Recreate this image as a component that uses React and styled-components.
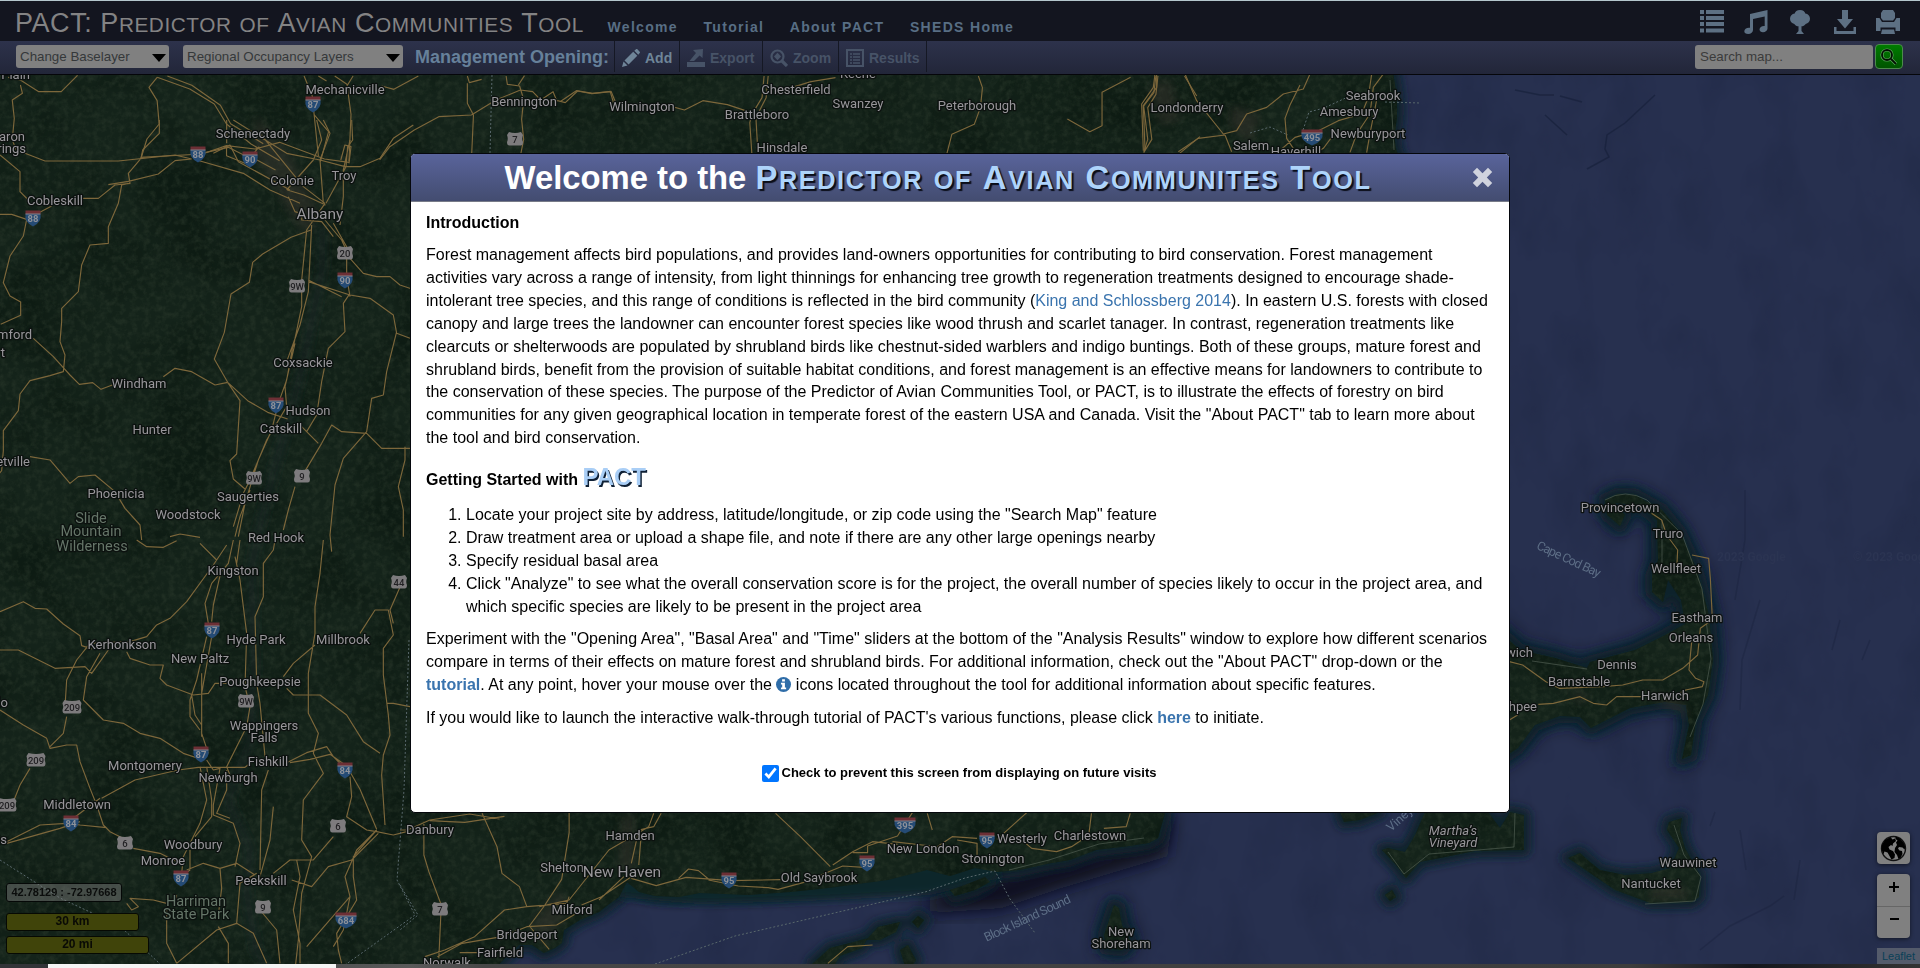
import React from "react";
import styled, { createGlobalStyle } from "styled-components";

const Global = createGlobalStyle`
  *, *::before, *::after { box-sizing: border-box; }
  body { margin: 0; background: #25304e; font-family: Arial, "Liberation Sans", sans-serif; overflow: hidden; }
`;

const Page = styled.div`
  display: flex;
  flex-direction: column;
  width: 1920px;
  height: 968px;
  border-top: 1px solid #b4c6cc;
  overflow: hidden;
  font-family: Arial, "Liberation Sans", sans-serif;
`;

/* Capitals at two sizes: a full-size initial, the rest of the word smaller. */
const CapsWord = styled.span`
  display: inline-block;
  font-size: 0.77em;
  line-height: 1;
  text-transform: uppercase;
  &::first-letter { font-size: ${(p) => (p.$flat ? "1em" : "1.2987em")}; }
`;
const Caps = ({ text }) =>
  text.split(" ").map((word, i) => (
    <React.Fragment key={word}>
      {i > 0 && " "}
      <CapsWord $flat={word === "of"}>{word}</CapsWord>
    </React.Fragment>
  ));

/* ---------- header ---------- */
const Header = styled.header`
  display: flex;
  flex: none;
  height: 40px;
  padding: 0 20px 0 15px;
  background: #13151f;
`;
const Brand = styled.h1`
  margin: 0;
  width: 592.5px;
  font-size: 27px;
  font-weight: 400;
  line-height: 45px;
  white-space: nowrap;
  letter-spacing: 0.55px;
  color: #838384;
`;
const Nav = styled.nav`
  display: flex;
  flex: 1;
  gap: 25.5px;
`;
const NavLink = styled.a`
  font-size: 14px;
  font-weight: 700;
  line-height: 52px;
  letter-spacing: 1.32px;
  white-space: nowrap;
  color: #586e84;
`;
const HeaderIcons = styled.div`
  display: flex;
  align-items: center;
  gap: 20px;
  padding-top: 1px;
  color: #5d7083;
  svg { display: block; }
  svg:nth-child(3) { margin: 0 4px 0 2px; }
`;

/* ---------- toolbar ---------- */
const Toolbar = styled.div`
  display: flex;
  flex: none;
  height: 34px;
  padding: 0 17px 0 16px;
  background: linear-gradient(#2d324b, #222639);
  border-bottom: 1px solid #05060a;
`;
const SelectBox = styled.div`
  display: flex;
  align-items: center;
  justify-content: space-between;
  width: ${(p) => p.$w}px;
  height: 23px;
  margin: 4px 14px 0 0;
  padding: 0 3px 0 4px;
  border-radius: 3px;
  background: #808080;
  font-size: 13.333px;
  color: #35383a;
  white-space: nowrap;
`;
const Caret = styled.span`
  border: 7px solid transparent;
  border-top: 8px solid #000;
  border-bottom: 0;
  margin-top: 2px;
`;
const ToolLabel = styled.div`
  width: 199px;
  margin-left: -2px;
  font-size: 18px;
  font-weight: 700;
  line-height: 32px;
  white-space: nowrap;
  color: #66809a;
`;
const Tool = styled.button`
  display: flex;
  align-items: center;
  gap: 5px;
  width: ${(p) => p.$w}px;
  height: 31px;
  padding: 3px 0 0 7px;
  border: 0;
  border-left: 1px solid #151824;
  background: none;
  font: 700 14px Arial, "Liberation Sans", sans-serif;
  color: ${(p) => (p.$on ? "#6f8598" : "#475367")};
  svg { display: block; flex: none; }
`;
const ToolEnd = styled.div`
  flex: 1;
  height: 31px;
  border-left: 1px solid #151824;
`;
const Search = styled.div`
  display: flex;
  gap: 2px;
  padding-top: 3px;
`;
const SearchField = styled.div`
  width: 178px;
  height: 24px;
  margin-top: 1px;
  padding-left: 5px;
  border-radius: 3px;
  background: #808080;
  font-size: 13.333px;
  line-height: 23px;
  color: #3b3b3b;
`;
const SearchButton = styled.button`
  display: grid;
  place-items: center;
  width: 28px;
  height: 25px;
  padding: 0;
  border: 1px solid #4d8a4d;
  border-radius: 4px;
  background: linear-gradient(#007c00, #005400);
`;

/* ---------- map ---------- */
const MapArea = styled.main`
  position: relative;
  flex: none;
  height: 889px;
  background: #27304e;
  overflow: hidden;
  svg { display: block; }
`;
const MapInfo = styled.div`
  position: absolute;
  left: 6px;
  bottom: 10px;
  display: flex;
  flex-direction: column;
  align-items: flex-start;
`;
const Coords = styled.div`
  width: 116px;
  height: 19px;
  margin-bottom: 11px;
  border: 1px solid #050807;
  border-radius: 3px;
  background: rgba(128, 128, 128, 0.46);
  font-size: 11px;
  font-weight: 700;
  line-height: 16px;
  letter-spacing: 0;
  text-align: center;
  color: #0b0d0c;
`;
const Scale = styled.div`
  width: ${(p) => p.$w}px;
  height: 18px;
  border: 1px solid #060903;
  border-radius: 3px;
  background: #40440a;
  font-size: 12px;
  font-weight: 700;
  line-height: 15px;
  text-align: center;
  color: #090a05;
  & + & { margin-top: 5px; }
`;
const MapControls = styled.div`
  position: absolute;
  right: 10px;
  bottom: 26px;
  width: 33px;
  display: flex;
  flex-direction: column;
  gap: 10px;
`;
const ControlBox = styled.div`
  border-radius: 4px;
  background: #808080;
  overflow: hidden;
  box-shadow: 0 1px 4px rgba(0, 0, 0, 0.55);
`;
const ControlCell = styled.div`
  display: grid;
  place-items: center;
  height: 32px;
  padding-bottom: ${(p) => p.$lift || 0}px;
  & + & { border-top: 1px solid #666; }
`;
const Credit = styled.div`
  position: absolute;
  right: 0;
  bottom: 0;
  width: 43px;
  height: 16px;
  padding-left: 5px;
  background: #545b6b;
  font-size: 11px;
  line-height: 16px;
  color: #093f57;
`;
const BottomStrip = styled.div`
  display: flex;
  flex: 1;
  padding-left: 48px;
  background: linear-gradient(90deg, #333438 0 48px, #5a5a5a 410px, #474747 484px, #3d3d3d 1630px, #15171d 1750px, #333 1919px);
`;
const StripThumb = styled.div`
  width: 288px;
  background: #f4f4f4;
`;

/* ---------- dialog ---------- */
const Dialog = styled.section`
  position: absolute;
  left: 410px;
  top: 153px;
  width: 1100px;
  height: 660px;
  display: flex;
  flex-direction: column;
  border: 1px solid #05070c;
  border-radius: 5px;
  background: #fff;
  overflow: hidden;
`;
const DialogHead = styled.div`
  display: flex;
  align-items: center;
  flex: none;
  height: 48px;
  padding: 0 16px 0 0;
  border-bottom: 1px solid #777b88;
  background: linear-gradient(#59649b, #434c70);
`;
const DialogTitle = styled.h2`
  flex: 1;
  margin: 0;
  padding-right: 7px;
  font-size: 32.8px;
  font-weight: 700;
  line-height: 46px;
  text-align: center;
  white-space: nowrap;
  color: #fff;
`;
const ToolName = styled.span`
  letter-spacing: 1.6px;
  color: #aed4fb;
  text-shadow: 2px 2px 1px #0a0d18;
`;
const CloseButton = styled.button`
  padding: 0;
  border: 0;
  background: none;
  svg { display: block; }
`;
const DialogBody = styled.div`
  padding: 10px 15px 0;
  font-size: 16px;
  line-height: 22.857px;
  color: #000;
`;
const Heading = styled.div`
  font-weight: 700;
  margin-top: ${(p) => p.$top || 0}px;
  line-height: ${(p) => p.$lh || 22.857}px;
`;
const Pact = styled.span`
  font-size: 24px;
  line-height: 1;
  color: #a9cef6;
  text-shadow: 1.5px 1.5px 0.5px #0f2035;
`;
const Text = styled.p`
  margin: ${(p) => p.$top || 10}px 0 0;
`;
const Steps = styled.ol`
  margin: 10px 0 0;
  padding-left: 40px;
`;
const Link = styled.a`
  color: #3a74ae;
  font-weight: ${(p) => (p.$bold ? 700 : 400)};
`;
const InfoIcon = styled.svg`
  vertical-align: -2px;
`;
const Consent = styled.label`
  display: flex;
  align-items: center;
  justify-content: center;
  gap: 3px;
  margin-top: 32px;
  padding-right: 2px;
  font-size: 13px;
  font-weight: 700;
`;
const Check = styled.input`
  width: 17px;
  height: 17px;
  margin: 0;
`;

/* ---------- icons ---------- */
const ListIcon = () => (
  <svg width="24" height="23" viewBox="0 0 24 23" fill="currentColor">
    {[0, 6, 12, 18.5].map((y) => (
      <g key={y}>
        <rect x="0" y={y} width="4" height="4" />
        <rect x="6" y={y} width="18" height="4" />
      </g>
    ))}
  </svg>
);
const MusicIcon = () => (
  <svg width="24" height="24" viewBox="0 0 24 24" fill="currentColor">
    <path d="M6 4 23.500 0v18.500c0 2-2 3.700-4.500 3.700-2 0-3.500-1-3.500-2.600 0-2 2-3.600 4.500-3.600h.7V6.500L9 9v11c0 2.300-2 4-4.800 4C1.800 24 .3 23 .3 21.300c0-2 2-3.600 4.700-3.600h1z" />
  </svg>
);
const TreeIcon = () => (
  <svg width="20" height="24" viewBox="0 0 20 24" fill="currentColor">
    <path d="M10 0c3 0 5 1.600 5.300 3.600C18 4 20 6 20 8.800c0 3-2 4.500-4.300 5.200-1.200 1.600-2.600 2.300-4.200 2.300V21l2.500 3H6l2.500-3v-4.700C6.800 16.300 5.300 15.600 4.300 14 2 13.500 0 11.700 0 8.800 0 6 2 4 4.700 3.600 5 1.600 7 0 10 0z" />
  </svg>
);
const DownloadIcon = () => (
  <svg width="22" height="24" viewBox="0 0 22 24" fill="currentColor">
    <path d="M8 0h6v9h5l-8 9.500L3 9h5zM0 17h2.500v4h17v-4H22v7H0z" />
  </svg>
);
const PrintIcon = () => (
  <svg width="24" height="24" viewBox="0 0 24 24" fill="currentColor">
    <path d="M7 0h10l2 3v5l-2 2.500H7L5 8V3zM0 8h3.500l2.500 4h12l2.500-4H24v13h-4.500v-3.500h-15V21H0zM6 19.500h12l1 4.500H5z" />
  </svg>
);
const PencilIcon = () => (
  <svg width="18" height="18" viewBox="0 0 18 18" fill="currentColor">
    <path d="M0 18l1.500-5.500 4 4zM2.500 11.400 11.200 2.700l4.100 4.100-8.700 8.700zM12.300 1.700 14 .2c.5-.3 1-.2 1.400.1L17.700 2.700c.4.500.4 1 0 1.400l-1.400 1.600z" />
  </svg>
);
const ExportIcon = () => (
  <svg width="18" height="18" viewBox="0 0 18 18" fill="currentColor">
    <path d="M0 13h18v5H0zM6 1l10-1-.5 9-3-2.500L7 12H2.500L9 4z" />
  </svg>
);
const ZoomIcon = () => (
  <svg width="18" height="18" viewBox="0 0 18 18" fill="none" stroke="currentColor">
    <circle cx="7.500" cy="7.500" r="6" strokeWidth="2.200" />
    <path d="M12 12l5 5" strokeWidth="3.200" />
    <path d="M7.500 3.800 11 7.500l-3.500 3.700L4 7.500z" fill="currentColor" stroke="none" />
  </svg>
);
const ResultsIcon = () => (
  <svg width="18" height="18" viewBox="0 0 18 18" fill="none" stroke="currentColor">
    <rect x="1" y="1" width="16" height="16" strokeWidth="2" />
    <path d="M4 5h2M4 8h2M4 11h2M4 14h2M7 5h7M7 8h7M7 11h7M7 14h7" strokeWidth="1.600" />
  </svg>
);
const SearchIcon = () => (
  <svg width="18" height="18" viewBox="0 0 18 18" fill="none">
    <g stroke="#5fa35f" strokeWidth="3.200"><circle cx="7" cy="7" r="5" /><path d="M11 11l5 5" /></g>
    <g stroke="#021002" strokeWidth="1.800"><circle cx="7" cy="7" r="5" /><path d="M11 11l5 5" /></g>
  </svg>
);
const CloseIcon = () => (
  <svg width="21" height="21" viewBox="0 0 21 21">
    <path d="M5 .8 10.500 6.200 16 .8 20.200 5 14.800 10.500l5.400 5.500-4.200 4.200-5.500-5.400L5 20.200.8 16l5.400-5.500L.8 5z" fill="#d0d3de" />
  </svg>
);
const GlobeIcon = () => (
  <svg width="27" height="27" viewBox="0 0 27 27">
    <circle cx="13.500" cy="13.500" r="12" fill="#808080" stroke="#111" strokeWidth="1.400" />
    <path d="M10.500 2 5 5 2 10l-.5 4 1.700 5.500 1.300-3 3 1 2 3.500 2 3.500 3-1.500.5-3.500-2-3.500-3.500-1.500-1-2.500 2.500-2 1.500 1 .5-2.500 3-2.500-1-2.500-2.500 1zM15.500 1.500 20 3.500l3.500 4L25.500 12l-1 2.500-2-2-3.500-.5-1 1.500 1.500 2 2.500.5.500 3-2 4-2 1-1.500-4-2.500-3 .5-4 2-3-1-2.500 1.500-2-2-1.500z" fill="#000" />
  </svg>
);

/* ---------- map data ---------- */
const places = [
  [345, 89, "Mechanicville"], [253, 133, "Schenectady"], [292, 180, "Colonie"], [344, 175, "Troy"],
  [55, 200, "Cobleskill"], [139, 383, "Windham"], [152, 429, "Hunter"], [303, 362, "Coxsackie"],
  [308, 410, "Hudson"], [281, 428, "Catskill"], [116, 493, "Phoenicia"], [248, 496, "Saugerties"],
  [188, 514, "Woodstock"], [276, 537, "Red Hook"], [233, 570, "Kingston"], [122, 644, "Kerhonkson"],
  [200, 658, "New Paltz"], [256, 639, "Hyde Park"], [343, 639, "Millbrook"], [260, 681, "Poughkeepsie"],
  [264, 725, "Wappingers"], [264, 737, "Falls"], [145, 765, "Montgomery"], [268, 761, "Fishkill"],
  [228, 777, "Newburgh"], [77, 804, "Middletown"], [193, 844, "Woodbury"], [163, 860, "Monroe"],
  [261, 880, "Peekskill"], [430, 829, "Danbury"], [630, 835, "Hamden"], [562, 867, "Shelton"],
  [572, 909, "Milford"], [527, 934, "Bridgeport"], [500, 952, "Fairfield"], [447, 962, "Norwalk"],
  [819, 877, "Old Saybrook"], [923, 848, "New London"], [1022, 838, "Westerly"], [993, 858, "Stonington"],
  [1090, 835, "Charlestown"], [1121, 931, "New"], [1121, 943, "Shoreham"], [1688, 862, "Wauwinet"],
  [1651, 883, "Nantucket"], [1620, 507, "Provincetown"], [1668, 533, "Truro"], [1676, 568, "Wellfleet"],
  [1697, 617, "Eastham"], [1691, 637, "Orleans"], [1617, 664, "Dennis"], [1579, 681, "Barnstable"],
  [1665, 695, "Harwich"], [524, 101, "Bennington"], [642, 106, "Wilmington"], [796, 89, "Chesterfield"],
  [757, 114, "Brattleboro"], [858, 103, "Swanzey"], [858, 73, "Keene"], [977, 105, "Peterborough"],
  [782, 147, "Hinsdale"], [1187, 107, "Londonderry"], [1373, 95, "Seabrook"], [1349, 111, "Amesbury"],
  [1368, 133, "Newburyport"], [1251, 145, "Salem"], [1296, 151, "Haverhill"],
];
const edgePlaces = [
  [25, 136, "Sharon"], [26, 148, "Springs"], [32, 334, "Stamford"], [5, 352, "rt"], [30, 461, "Margaretville"],
  [8, 702, "Monticello"], [7, 839, "Port Jervis"], [30, 74, "Fort Plain"], [1533, 652, "Sandwich"], [1537, 706, "Mashpee"],
];
const parks = [
  [91, 518, "Slide"], [91, 531, "Mountain"], [92, 546, "Wilderness"], [196, 901, "Harriman"], [196, 914, "State Park"],
];
const interstates = [
  [198, 154, "88"], [250, 159, "90"], [33, 218, "88"], [345, 280, "90"], [276, 405, "87"], [212, 630, "87"],
  [201, 754, "87"], [345, 770, "84"], [71, 823, "84"], [181, 878, "87"], [346, 920, "684"], [313, 104, "87"],
  [729, 880, "95"], [867, 863, "95"], [905, 825, "395"], [987, 840, "95"], [1312, 137, "495"],
];
const usRoutes = [
  [345, 253, "20"], [297, 286, "9W"], [254, 478, "9W"], [302, 476, "9"], [399, 582, "44"], [72, 707, "209"],
  [246, 701, "9W"], [36, 760, "209"], [7, 805, "209"], [338, 826, "6"], [125, 843, "6"], [263, 907, "9"],
  [515, 139, "7"], [440, 909, "7"],
];

/* Each sheet is a piece of the road network, digitised on its own grid. */
const roadSheets = [
  {
    t: "translate(0 0) scale(.40816 .33333)",
    d: [
      "M190 226 150 275H95L50 240 20 232M50 255l5 25-25 20 5 55-5 65 10 30",
      "M385 232l-20 30 20 40 5 70-30 45-15 60M385 232l80 35 60 45 30 60 60 60 70 50M410 228l60 28 70 60 25 55 80 60M745 228l20 60 5 60 10 120M770 345l35 50-20 90M820 228l30 25 10 90-5 140M1025 228l-60 40-30-10M865 228l-15 30M780 228l20 15",
      "M345 472l150-10 60-25 70 10 60-20 110 50 60 10M555 437v30l60 30M635 440l-20 30 60 40M835 480l10-45 15 5-5 50",
      "M1145 228l5 20 30-10M1145 250v60l15 35-5 135M1155 345l-80 5-60 40-60 50-25 40M1155 345l60-45 60-30 30 5 20 25 30-25 10 30M1240 228l3 25 30 5 10 40-5 60 5 60-10 62M1270 255l15-28M1360 300l25 8 30-35 35 8 45-6 10 40",
    ],
  },
  {
    t: "translate(560 0) scale(.40816 .33333)",
    d: [
      "M0 305l40-33 40 8 45-6 10 30M275 320l30 10 45-28 60 12 50 20M500 228l-5 65-25 50-5 25 5 92M510 228l-5 65-25 60 5 107M535 275l80-30 60-12M1025 228l10 35-5 60-15 50-55 30-12 57M1398 232l-70 45v100l-30 18-55-38M1460 228l-5 50-25 40 10 100-10 40M1465 228l-5 55-20 40 10 95-20 40M1530 228l30 60M1568 410l-50 50",
    ],
  },
  {
    t: "translate(0 120) scale(.33333)",
    d: [
      "M478 0v40l-50 50-5 25-38 45 5 30-45 5-50 40h-50M0 105l60 50v60l25 25M0 283h35l45 15 75-40M75 100l60 23h220l170-18 50 12M575 117l-50 5-50 40-90 22-60 10M575 107l110-25 70 35M385 190l-20 5-10 55-30 70v50l-55 5-25 60-10 80-50 50v40l-5 60 15 40-5 50-40 12-60 15-30 40-5 50-45 60v60l-5 60-25 30M80 298l-10 50-40 60-20 80 20 40 32 18v40l-60 27M100 655l60 55 50 55 28 28 40-5 25 20 40-15M490 770l35-25 50 10 70 40 38-8M683 787l-40-70 30-80 20-115 55-35 10-60 30-25 85-50 60-22M683 787l60 55 60 35 60 20M683 787l37 55-10 160-20 20 10 55 35 30",
      "M590 120l140 40 80 50 90 40M640 100l50-25 25 50 155 85M680 0v70M700 0l80 50 80 50 100 20 75 20h45l60-25 40-60 60-40M780 40l130 160 65 50M950 0l15 60-25 60-80 90M970 0l20 40-30 80 10 130M1055 0l3 60-15 20-5 60-60 110M1050 60l-20 90v80l-10 85M862 210l50 15 65 30M865 230l20 45 30 10M905 260v40l60 5 35 45M975 250l-55 80-15 150v80l-25 120M935 315l-10 200-25 100-40 110M1000 310l40 70v90l10 60M975 300l50 60 25 55 40 45 40 10h40l30 25 45 15M925 485l125 40 60 10 70 50 10 55 40 15M925 480l100 50M1050 520l-20 30 5 85-50 50-20 100-15 100-30 50M1190 635l-30 120-10 70-35 10-15 100-70 80-25 80-15 150 5 50M1100 940l-75-5-30-20-30 55-60 100M905 920l50 50M1100 940l45 45h85M1215 980v40l-20 80 15 70v80M880 670l-20 110-25 70-20 80-40 90-40 130-20 100M885 670l-30 130 5 60-60 100-50 120-20 40-30 100M885 1100l-20 70-15 60M750 1110l-30 80-15 60M90 1010l60 10 60 70 25-20 50-5 60 50 30 50 45 50 5 45M510 1250l30-8 60 10",
    ],
  },
  {
    t: "translate(0 540) scale(.33333)",
    d: [
      "M410 0l30 20 50 2 40-20M600 10l50 50M680 15l-40 60-80 110-50 50-40 20-30 35-50 15-120 5-40 50-30 60-5 80M700 0l-15 70-50 60-20 60 10 60M665 85l-25 110-5 50M705 50l15 70 20 160-5 160 15 60-10 60-60 120 10 25M720 0l-10 70M825 0l-5 30-30 40v100l-25 60 5 200 10 60 15 160M970 0l-10 100-15 100v80l-20 120v120l30 60-15 60 30 60-60 80-5 120 30 50-30 110-10 140-10 90M0 215l70-30 35 20 35 2 50 45 50 35 5 30 30 10M0 330h55l110 55 90-5 20 20 50-70M300 340l-40 70-10 70 60 60 60 10 50 30 60 15 70 45 60 20M380 335l10 20 60 20h40l-10 40 20 20 80 30 45-5 20-30h35M575 465l10 60 20 30M620 290l-30 130-20 60v50l30 40M635 290l-30 170v130M605 400v180l20 60M0 510l70 45 70 40 10 30 50-10h30l10 50 30 80 20 50 20 60 20 20 60 30M200 530l-10 50-40 40M90 685l-30 50-20 50M305 775l100-55 130-30 60-8h140l20-15M220 835l80-60M20 905l100-50 80-5 40 5 80 8M20 910l160-45 60-20M620 660l20 30 20-5-20 110v30l60 25 20 60-15 70M620 680l15 100v50l-50 60M680 690v60l-30 70 40 15M600 680l20 100-20 70-50 100-5 50M570 930v60l-20 15M400 925l80 15 60 30M560 990l50-20 50 15 50-15 55 35M860 445l20 20h80l80 60 50 80 50 35M850 410l30-40 65-55M1080 280l45-70h40l15 75-30 40v80l15 120 5 60-20 60-5 60 10 150M1205 130l-35 80 10 40M1160 490h20l50 10M860 668l60-30 60-18 20 30 40 40M870 668l60-10 60-15 50 35 40 70 50 120M1050 710l5 60-15 60 60 40 30 5 50 10 40-10M1130 870l-60 60-35 80 15 60-130 150M1135 880l-80 80-70 20-50 60-60-20M1000 890l-60 70h-70l-50 40M1130 870l-70 80v60l10 70-60 100 5 50 10 40M1050 1070l-20 100-30 50M890 960l10 50-20 100 20 100v60M770 1000l-50 30-10 120-60 20-120 100M710 1150l50 30 40 90M655 1160l30 50v60M780 1110l50 60 10 100M660 985l5 60-10 80M380 1090l15 20 20-10-25-25 70 5 40 10v120l30 60M805 690l-20 60-5 240M820 800l-10 100-30 110M530 1065l-10 30",
    ],
  },
  {
    t: "translate(400 800) scale(.49745 .33333)",
    d: [
      "M0 90h15l45-30 80-18 60 15M60 62l70 5 80-18M48 65v100l10 50 25 100-5 160M165 40l30 100 10 80 35 40 15 60M340 38v60l-15 140-35 80-30 60 40 70M255 320l80-10 5-20M255 320l-45 10-60 80-60 40-40 20M120 458h40M75 470l50-40 80-20 50-30 60-5 45-40M525 40l-15 40-30 10-15 100M510 40l-10 40-80 70-80 150-60 20M485 100l-5 95M465 230l-60 60-40 25M450 230l-50 70M465 235l50 22 60-25 90 10 100-3M560 235l20-28 20 5 20 25M620 240l60 18 60 5 20 5 50-20 40-25 40-25 50 5M755 40l50 70 60 90M870 195l40-40 40-30 50 8M910 158h30v-20l60-30 30-70M990 125l60 10 30 5 30-30 50 5M1060 40l10 50M1120 120l40 10v40M1200 118l60-80M1250 120l20 25 50 10 30-15 30-30M1390 40l-5 60M1415 85l45-5 8-40M860 490l40-50 50-5",
    ],
  },
  {
    t: "translate(1500 450) scale(.33333)",
    d: [
      "M28 635l40 10 70 50 40 20 130-5 60-5 60-15h60l60-35 45-40 8-80 35-25v-25l-5-100-5-60-50-10M575 575l-8 85 20 25 25 10-5 15-50 10-60 30M425 740h-75l-30 25-40-5-40-20-80 20-45 3M28 810l25-15M455 190l30 20 15 45 33 45-3 60",
    ],
  },
  {
    t: "translate(1130 70) scale(.33333)",
    d: [
      "M80 12v40l-40 55 5 130M75 12l-5 40-35 50 5 140M165 12l35 80 80 100 40-10 30-50 60-20 50-40 60-15 20-45M510 45l-30 60-15 40 5 60 20 30M285 195l-80 10-60 40M285 195l20 50M725 12l-10 70-20 50-70 20-60 30-70 20-40 35M760 12l-30 40-10 80-40 60-20 55M740 90l-20 100-10 58M610 195l-30 40-20 12",
    ],
  },
];

const mainland = "M-10 60H1390Q1400 100 1396 125T1402 160V500L1165 700V813L1158 838 1149 843 1130 846 1096 850 1070 860 1047 864 1020 870 997 872 975 868 950 876 927 870 888 880 858 884 828 888 790 892 748 895 700 893 679 897 655 896 639 892 627 882 619 897 608 905 599 912 580 920 564 930 562 943 555 948 544 953 532 945 519 945 505 958 489 975H-10z";
const capeCod = "M1500 632 1520 650 1555 658 1587 668 1590 662 1635 650 1665 635 1685 624 1681 600 1668 580 1663 602 1652 592 1652 575 1658 560 1657 520 1640 505 1615 503 1625 515 1620 526 1607 515 1605 500 1618 494 1635 495 1662 510 1680 532 1697 570 1709 615 1713 660 1708 695 1696 720 1691 755 1682 759 1689 725 1686 705 1665 702 1630 708 1591 728 1580 717 1560 716 1535 725 1518 748 1500 760z";
const islands = [
  "M1382 850 1388 848 1405 852 1415 835 1425 812 1488 812 1500 828 1510 812 1524 815 1524 850 1475 851 1420 862 1406 878 1396 865z",
  "M1568 858 1580 853 1590 862 1600 870 1625 875 1652 873 1670 868 1679 848 1667 830 1669 822 1682 818 1680 830 1685 848 1700 875 1699 897 1692 902 1650 903 1615 890 1590 873z",
  "M1385 895 1392 890 1396 897 1390 901z",
  "M1104 935 1114 905 1119 908 1122 925 1130 940 1122 950 1106 948z",
  "M812 964 830 948 850 943 868 938 862 948 840 956 834 966z",
  "M866 940 878 927 900 922 896 932 880 940z",
  "M912 922 918 916 924 920 918 928z",
  "M950 890 965 885 985 877 990 882 975 890 955 896z",
  "M900 950 908 945 916 960 912 966 905 966z",
  "M1340 812 1380 812 1360 820 1344 822z",
];
const land = [mainland, capeCod, ...islands];

const Interstate = ({ x, y, n }) => {
  const w = n.length > 2 ? 10.5 : 7.5;
  return (
    <g transform={`translate(${x} ${y})`}>
      <path d={`M${-w} -4Q${-w - 1.5} 4 0 8.500Q${w + 1.5} 4 ${w} -4z`} fill="#254b75" />
      <path d={`M${-w} -7.500H${w}V-4H${-w}z`} fill="#6d2f35" />
      <path d={`M${-w} -4H${w}`} stroke="#85858d" strokeWidth="1" />
      <text y="4" textAnchor="middle" fontSize="9.500" fontWeight="700" fill="#8d9199">{n}</text>
    </g>
  );
};
const UsRoute = ({ x, y, n }) => {
  const w = n.length > 2 ? 9.5 : 8;
  return (
    <g transform={`translate(${x} ${y})`}>
      <path d={`M${-w + 2} -7Q0 -5 ${w - 2} -7L${w} -4Q${w - 1.5} 0 ${w} 3Q${w} 7 ${w - 3} 6.500H${-w + 3}Q${-w} 7 ${-w} 3Q${-w + 1.5} 0 ${-w} -4z`} fill="#7d7b7d" />
      <text y="3.500" textAnchor="middle" fontSize="9.500" fontWeight="500" fill="#222124">{n}</text>
    </g>
  );
};

const MapDrawing = () => (
  <svg width="1920" height="889" viewBox="0 75 1920 889" fontFamily="Roboto, sans-serif">
    <defs>
      <filter id="ground" x="0" y="75" width="1920" height="889" filterUnits="userSpaceOnUse" colorInterpolationFilters="sRGB">
        <feTurbulence type="fractalNoise" baseFrequency="0.16" numOctaves="4" seed="8" />
        <feColorMatrix values="0 0 0 0 0.18  0 0 0 0 0.235  0 0 0 0 0.18  2.2 0 0 0 -0.88" />
        <feComposite in2="SourceGraphic" operator="in" />
      </filter>
      <filter id="relief" x="0" y="75" width="1920" height="889" filterUnits="userSpaceOnUse" colorInterpolationFilters="sRGB">
        <feTurbulence type="fractalNoise" baseFrequency="0.014" numOctaves="4" seed="21" />
        <feColorMatrix values="0 0 0 0 0.04  0 0 0 0 0.09  0 0 0 0 0.06  3 0 0 0 -1.2" />
        <feComposite in2="SourceGraphic" operator="in" />
      </filter>
      <filter id="sea" x="0" y="75" width="1920" height="889" filterUnits="userSpaceOnUse" colorInterpolationFilters="sRGB">
        <feTurbulence type="fractalNoise" baseFrequency="0.02 0.012" numOctaves="4" seed="4" />
        <feColorMatrix values="0 0 0 0 0.09  0 0 0 0 0.12  0 0 0 0 0.22  1.6 0 0 0 -0.72" />
      </filter>
      <filter id="soft" x="-20%" y="-20%" width="140%" height="140%"><feGaussianBlur stdDeviation="4" /></filter>
      <filter id="wide" x="-20%" y="-20%" width="140%" height="140%"><feGaussianBlur stdDeviation="9" /></filter>
    </defs>

    <rect y="75" width="1920" height="889" fill="#27304f" />
    <rect y="75" width="1920" height="889" filter="url(#sea)" opacity=".35" />

    <path d="M1165 812 1160 850 1060 880 1000 900 930 905 1000 885 1090 860 1150 850z" fill="#0d101d" stroke="#0d101d" strokeWidth="16" filter="url(#wide)" />
    <g filter="url(#wide)" fill="#0f1a28" stroke="#0f1a28" strokeWidth="12">
      <path d={capeCod} /><path d={islands[3]} />
    </g>
    <g filter="url(#soft)" fill="#10242c" stroke="#10242c" strokeWidth="13" strokeLinejoin="round">
      {land.map((d) => <path key={d} d={d} />)}
    </g>
    <path d="M620 897 700 904 830 900 930 895 1000 878 990 860 620 880z" fill="#10252b" filter="url(#soft)" />

    <g fill="#14231a">{land.map((d) => <path key={d} d={d} />)}</g>
    <g filter="url(#relief)" opacity=".6">{land.map((d) => <path key={d} d={d} />)}</g>
    <g filter="url(#ground)" opacity=".5">{land.map((d) => <path key={d} d={d} />)}</g>

    <g fill="#39362f" opacity=".5" filter="url(#soft)">
      <path d="M255 115l35 40 30 60-15 20-20-30-30-50z" />
      <path d="M530 925l30-35 10 20-25 35zM622 815l12 0 0 60-15-5z" />
      <path d="M1230 105l30 10-10 30-20-20zM1150 85l20-5 10 40-20 5z" />
      <path d="M1640 690l40 8 10 20-20-10zM1570 690l20 6-10 8zM1650 890l30-6 10 14-40 2z" />
    </g>
    <path
      d="M322 225v45l-14 70-14 60-20 70-15 60-8 40 3 100-4 70-22 60 8 20 14 30-4 40 10 60 20 30"
      fill="none" stroke="#1f2a2f" strokeWidth="7" opacity=".5" filter="url(#soft)"
    />
    <g fill="none" stroke="#59665a" strokeWidth="1" opacity=".6">
      <path d="M1390 80 1394 150M1009 870l40-10 50-16 45-6M1605 500q20-12 42 0l35 34 20 55 9 70-8 45-13 33M1532 661l55 8M1662 520v50M1515 813l-1 34-85 7-25 20-16-22M1674 825l10 30 17 22-6 24-50 3" />
    </g>
    <g fill="none" stroke="#17203a" strokeWidth="1.500" opacity=".65">
      <path d="M1515 90l25 5 14 0M1560 96l22 6M1545 115l22 20" />
      <path d="M1655 95l-30 28-18 12-2 14 4 8-22 12" />
      <path d="M1745 490v50l-10 60M1760 600l-18 60-2 50M1870 640l-8 20M1840 620l-8 30" opacity=".5" />
      <path d="M1715 812l-5 14M1700 950l30-24 40-20 14-10M1740 830l6 40M1800 860l-6 40" opacity=".5" />
    </g>

    <g fill="none" stroke="#7d673b" strokeWidth="1.150" strokeLinejoin="round">
      {roadSheets.map((s) => (
        <g key={s.t} transform={s.t}>
          {s.d.map((d) => <path key={d} d={d} vectorEffect="non-scaling-stroke" />)}
        </g>
      ))}
    </g>

    <g fill="none" stroke="#59686c" strokeWidth="1" strokeDasharray="2 2">
      <path d="M492 75l-2 78M409 640l-5 150-7 90 18 35-70 50M0 860l60 38 60 28 40 38M400 885l18 30-18 15M655 964l80-28 190-44 40-14 30-7 15 28 25 34M1303 130l6-18 15-4 26-12M1250 133l20-6 18 8M1385 102l35 1" />
    </g>

    <g textAnchor="middle" fontSize="13" fill="#98969a" stroke="#0c110f" strokeWidth="2.600" strokeLinejoin="round" paintOrder="stroke">
      {places.map(([x, y, name]) => <text key={name} x={x} y={y + 4.5}>{name}</text>)}
      <g textAnchor="end">
        {edgePlaces.map(([x, y, name]) => <text key={name} x={x} y={y + 4.5}>{name}</text>)}
      </g>
      <g fontSize="15.500">
        <text x="320" y="219">Albany</text>
        <text x="622" y="877">New Haven</text>
      </g>
      <g fontStyle="italic">
        <text x="1453" y="835">Martha’s</text>
        <text x="1453" y="847">Vineyard</text>
      </g>
      <g fontSize="14.500" fill="#657568">
        {parks.map(([x, y, name]) => <text key={name} x={x} y={y + 5}>{name}</text>)}
      </g>
    </g>
    <g textAnchor="middle" fontSize="12.500" fill="#5d6e86">
      <text transform="translate(1029 922) rotate(-25)" textLength="94">Block Island Sound</text>
      <text transform="translate(1567 563) rotate(25)" textLength="69">Cape Cod Bay</text>
      <text transform="translate(1391 832) rotate(-42)" textAnchor="start">Vineyard Sound</text>
    </g>
    <g fontSize="12" fontWeight="700" fill="#2b3452">
      <text x="1717" y="561">2023 Google</text>
      <text x="1853" y="561">© 2023 Google</text>
    </g>
    {interstates.map(([x, y, n]) => <Interstate key={`${x}-${y}`} x={x} y={y} n={n} />)}
    {usRoutes.map(([x, y, n]) => <UsRoute key={`${x}-${y}`} x={x} y={y} n={n} />)}
  </svg>
);

export default function App() {
  return (
    <>
      <Global />
      <Page>
        <Header>
          <Brand>PACT: <Caps text="Predictor of Avian Communities Tool" /></Brand>
          <Nav>
            {["Welcome", "Tutorial", "About PACT", "SHEDS Home"].map((t) => <NavLink key={t}>{t}</NavLink>)}
          </Nav>
          <HeaderIcons>
            <ListIcon /><MusicIcon /><TreeIcon /><DownloadIcon /><PrintIcon />
          </HeaderIcons>
        </Header>
        <Toolbar>
          <SelectBox $w={153}>Change Baselayer<Caret /></SelectBox>
          <SelectBox $w={220}>Regional Occupancy Layers<Caret /></SelectBox>
          <ToolLabel>Management Opening:</ToolLabel>
          <Tool $w={65} $on><PencilIcon />Add</Tool>
          <Tool $w={83}><ExportIcon />Export</Tool>
          <Tool $w={76}><ZoomIcon />Zoom</Tool>
          <Tool $w={88}><ResultsIcon />Results</Tool>
          <ToolEnd />
          <Search>
            <SearchField>Search map...</SearchField>
            <SearchButton><SearchIcon /></SearchButton>
          </Search>
        </Toolbar>
        <MapArea>
          <MapDrawing />
          <MapInfo>
            <Coords>42.78129 : -72.97668</Coords>
            <Scale $w={133}>30 km</Scale>
            <Scale $w={143}>20 mi</Scale>
          </MapInfo>
          <MapControls>
            <ControlBox><ControlCell><GlobeIcon /></ControlCell></ControlBox>
            <ControlBox>
              <ControlCell $lift={6}><svg width="10" height="10"><path d="M5 0v10M0 5h10" stroke="#000" strokeWidth="2" /></svg></ControlCell>
              <ControlCell $lift={7}><svg width="10" height="10"><path d="M1 5h9" stroke="#000" strokeWidth="2" /></svg></ControlCell>
            </ControlBox>
          </MapControls>
          <Credit>Leaflet</Credit>
        </MapArea>
        <BottomStrip><StripThumb /></BottomStrip>
      </Page>

      <Dialog>
        <DialogHead>
          <DialogTitle>
            Welcome to the <ToolName><Caps text="Predictor of Avian Communites Tool" /></ToolName>
          </DialogTitle>
          <CloseButton aria-label="Close"><CloseIcon /></CloseButton>
        </DialogHead>
        <DialogBody>
          <Heading>Introduction</Heading>
          <Text $top={9.4}>
            Forest management affects bird populations, and provides land-owners opportunities for contributing to bird
            conservation. Forest management activities vary across a range of intensity, from light thinnings for
            enhancing tree growth to regeneration treatments designed to encourage shade-intolerant tree species, and
            this range of conditions is reflected in the bird community (<Link>King and Schlossberg 2014</Link>). In
            eastern U.S. forests with closed canopy and large trees the landowner can encounter forest species like wood
            thrush and scarlet tanager. In contrast, regeneration treatments like clearcuts or shelterwoods are
            populated by shrubland birds like chestnut-sided warblers and indigo buntings. Both of these groups, mature
            forest and shrubland birds, benefit from the provision of suitable habitat conditions, and forest management
            is an effective means for landowners to contribute to the conservation of these species. The purpose of the
            Predictor of Avian Communities Tool, or PACT, is to illustrate the effects of forestry on bird communities
            for any given geographical location in temperate forest of the eastern USA and Canada. Visit the "About
            PACT" tab to learn more about the tool and bird conservation.
          </Text>
          <Heading $top={15.1} $lh={29}>Getting Started with <Pact>PACT</Pact></Heading>
          <Steps>
            <li>Locate your project site by address, latitude/longitude, or zip code using the "Search Map" feature</li>
            <li>Draw treatment area or upload a shape file, and note if there are any other large openings nearby</li>
            <li>Specify residual basal area</li>
            <li>
              Click "Analyze" to see what the overall conservation score is for the project, the overall number of
              species likely to occur in the project area, and which specific species are likely to be present in the
              project area
            </li>
          </Steps>
          <Text>
            Experiment with the "Opening Area", "Basal Area" and "Time" sliders at the bottom of the "Analysis Results"
            window to explore how different scenarios compare in terms of their effects on mature forest and shrubland
            birds. For additional information, check out the "About PACT" drop-down or the{" "}
            <Link $bold>tutorial</Link>. At any point, hover your mouse over the{" "}
            <InfoIcon width="15" height="15" viewBox="0 0 16 16">
              <circle cx="8" cy="8" r="8" fill="#2f6da8" />
              <path d="M6.500 2.500h3v2.300h-3zM5.300 6.200h4.200v5h1.300v1.900H5.300v-1.900h1.300V8.100H5.300z" fill="#fff" />
            </InfoIcon>{" "}
            icons located throughout the tool for additional information about specific features.
          </Text>
          <Text>
            If you would like to launch the interactive walk-through tutorial of PACT's various functions, please click{" "}
            <Link $bold>here</Link> to initiate.
          </Text>
          <Consent>
            <Check type="checkbox" defaultChecked />
            Check to prevent this screen from displaying on future visits
          </Consent>
        </DialogBody>
      </Dialog>
    </>
  );
}
